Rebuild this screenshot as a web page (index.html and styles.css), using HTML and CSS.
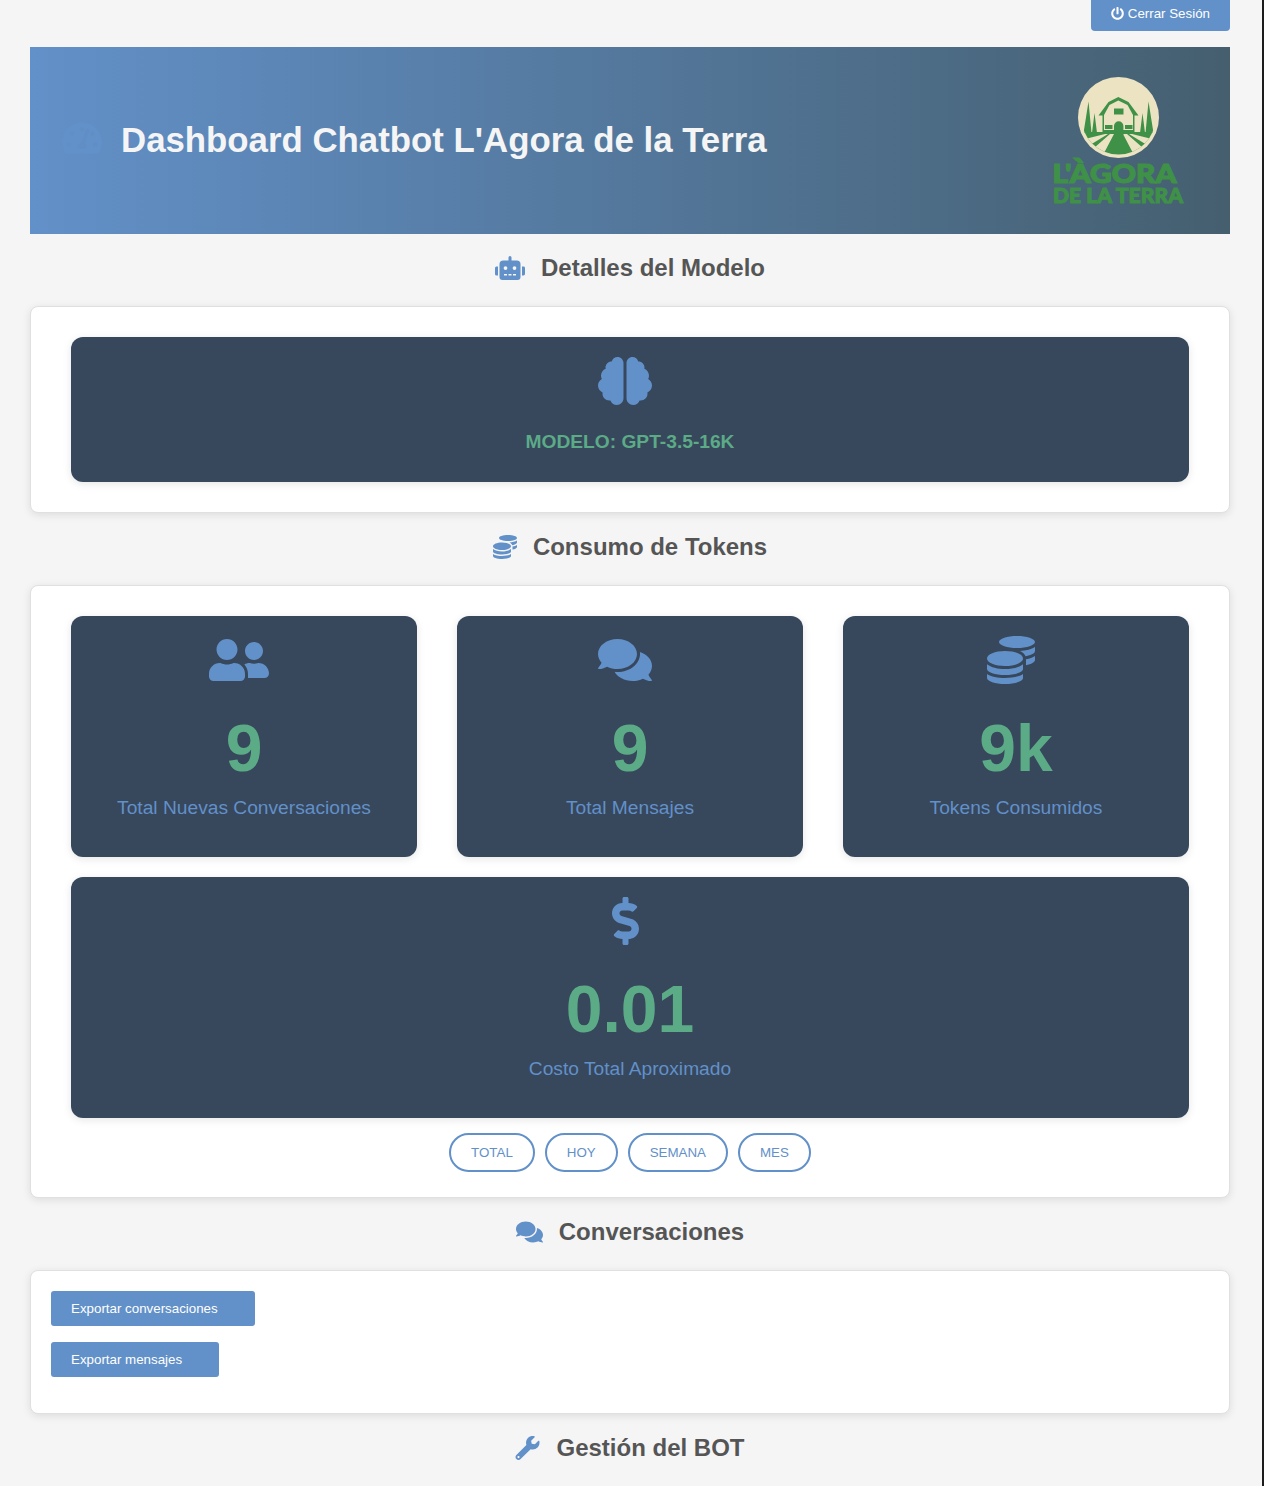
FILE: index.html
```html
<!DOCTYPE html>
<html lang="es">

<head>
    <meta charset="utf-8">
    <meta name="viewport" content="width=device-width, initial-scale=1">
    <title>Dashboard Chatbot L'Agora de la Terra</title>
    <link rel="stylesheet" href="styles.css">
</head>

<body>
    <svg class="sprite" aria-hidden="true">
        <symbol id="i-comments" viewBox="0 0 576 512"><path d="M416 192c0-88.4-93.1-160-208-160S0 103.6 0 192c0 34.3 14.1 65.9 38 92-13.4 30.2-35.5 54.2-35.8 54.5-2.2 2.3-2.8 5.7-1.5 8.7S4.8 352 8 352c36.6 0 66.9-12.3 88.7-25 32.2 15.7 70.3 25 111.3 25 114.9 0 208-71.6 208-160zm122 220c23.9-26 38-57.7 38-92 0-66.9-53.5-124.2-129.3-148.1.9 6.6 1.3 13.3 1.3 20.1 0 105.9-107.7 192-240 192-10.8 0-21.3-.8-31.7-1.9C207.8 439.6 281.8 480 368 480c41 0 79.1-9.2 111.3-25 21.8 12.7 52.1 25 88.7 25 3.2 0 6.1-1.9 7.3-4.8 1.3-2.9.7-6.3-1.5-8.7-.3-.3-22.4-24.2-35.8-54.5z"/></symbol>
        <symbol id="i-coins" viewBox="0 0 512 512"><path d="M0 405.3V448c0 35.3 86 64 192 64s192-28.7 192-64v-42.7C342.7 434.4 267.2 448 192 448S41.3 434.4 0 405.3zM320 128c106 0 192-28.7 192-64S426 0 320 0 128 28.7 128 64s86 64 192 64zM0 300.4V352c0 35.3 86 64 192 64s192-28.7 192-64v-51.6c-41.3 34-116.9 51.6-192 51.6S41.3 334.4 0 300.4zm416 11c57.3-11.1 96-31.7 96-55.4v-42.7c-23.2 16.4-57.3 27.6-96 34.5v63.6zM192 160C86 160 0 195.8 0 240s86 80 192 80 192-35.8 192-80-86-80-192-80zm219.3 56.3c60-10.8 100.7-32 100.7-56.3v-42.7c-35.5 25.1-96.5 38.6-160.7 41.8 29.5 14.3 51.2 33.5 60 57.2z"/></symbol>
    </svg>

    <main class="page">
        <div class="topbar">
            <a class="btn btn-logout" href="#">
                <svg class="power" viewBox="0 0 512 512"><path d="M400 54.1c63 45 104 118.6 104 201.9 0 136.8-110.8 247.7-247.5 248C120 504.3 8.2 393 8 256.4 7.9 173.1 48.9 99.3 111.8 54.2c11.7-8.3 28-4.8 35 7.7L162.6 90c5.9 10.5 3.1 23.8-6.6 31-41.5 30.8-68 79.6-68 134.9-.1 92.3 74.5 168.1 168 168.1 91.6 0 168.6-74.2 168-169.1-.3-51.8-24.7-101.8-68.1-134-9.7-7.2-12.4-20.5-6.5-30.9l15.8-28.1c7-12.4 23.2-16.1 34.8-7.8zM296 264V24c0-13.3-10.7-24-24-24h-32c-13.3 0-24 10.7-24 24v240c0 13.3 10.7 24 24 24h32c13.3 0 24-10.7 24-24z"/></svg>
                Cerrar Sesión
            </a>
        </div>

        <header class="hero">
            <div class="hero-title">
                <svg class="hero-icon" viewBox="0 0 576 512"><path d="M288 32C128.94 32 0 160.94 0 320c0 52.8 14.25 102.26 39.06 144.8 5.61 9.62 16.3 15.2 27.44 15.2h443c11.14 0 21.83-5.58 27.44-15.2C561.75 422.26 576 372.8 576 320c0-159.06-128.94-288-288-288zm0 64c14.71 0 26.58 10.13 30.32 23.65-1.11 2.26-2.64 4.23-3.45 6.67l-9.22 27.67c-5.13 3.49-10.97 6.01-17.64 6.01-17.67 0-32-14.33-32-32S270.33 96 288 96zM96 384c-17.67 0-32-14.33-32-32s14.33-32 32-32 32 14.33 32 32-14.33 32-32 32zm48-160c-17.67 0-32-14.33-32-32s14.33-32 32-32 32 14.33 32 32-14.33 32-32 32zm246.77-72.41l-61.33 184C343.13 347.33 352 364.54 352 384c0 11.72-3.38 22.55-8.88 32H232.88c-5.5-9.45-8.88-20.28-8.88-32 0-33.94 26.5-61.43 59.9-63.59l61.34-184.01c4.17-12.56 17.73-19.45 30.36-15.17 12.57 4.19 19.35 17.77 15.17 30.36zm14.66 57.2l15.52-46.55c3.47-1.29 7.13-2.23 11.05-2.23 17.67 0 32 14.33 32 32s-14.33 32-32 32c-11.38-.01-20.89-6.28-26.57-15.22zM480 384c-17.67 0-32-14.33-32-32s14.33-32 32-32 32 14.33 32 32-14.33 32-32 32z"/></svg>
                <h1>Dashboard Chatbot L'Agora de la Terra</h1>
            </div>
            <svg class="logo" viewBox="0 0 132 134">
                <defs>
                    <clipPath id="inner"><circle cx="66.5" cy="40.5" r="37"/></clipPath>
                </defs>
                <circle class="logo-cream" cx="66.5" cy="40.5" r="40.5"/>
                <g clip-path="url(#inner)">
                    <rect class="logo-green" x="20" y="55" width="94" height="30"/>
                    <path class="logo-green" d="M31.500 56L36.500 24.500L39.500 56ZM40 56L42.500 36L45 56ZM101.500 56L96.500 24.500L93.500 56ZM93 56L90.500 36L88 56Z"/>
                    <path class="logo-cream" d="M58 57L62 57L51 78L42 71ZM53 57L56 57L38 68L33 62ZM75 57L71 57L82 78L91 71ZM80 57L77 57L95 68L100 62Z"/>
                </g>
                <path class="logo-green" d="M66.300 20L76.500 25L86.500 38.500H82.500V55H50.500V38.500H46.500L56.500 25Z"/>
                <path class="logo-cream" d="M66.300 23.500L75.500 28L81 38V53H52V38L57.500 28Z"/>
                <rect class="logo-green" x="62" y="31.500" width="9.500" height="6"/>
                <rect class="logo-green" x="53" y="48" width="7.500" height="4"/>
                <rect class="logo-green" x="73" y="48" width="7.500" height="4"/>
                <path class="logo-green" d="M62 49a4.700 4.700 0 0 1 9.400 0V58H62Z"/>
                <text class="logo-top" x="0.500" y="106" textLength="124" lengthAdjust="spacingAndGlyphs">L'ÀGORA</text>
                <text class="logo-bottom" x="1" y="126" textLength="130" lengthAdjust="spacingAndGlyphs">DE LA TERRA</text>
            </svg>
        </header>

        <h2 class="section-title">
            <svg class="title-icon" viewBox="0 0 640 512"><path d="M32,224H64V416H32A31.96166,31.96166,0,0,1,0,384V256A31.96166,31.96166,0,0,1,32,224Zm512-48V448a64.06328,64.06328,0,0,1-64,64H160a64.06328,64.06328,0,0,1-64-64V176a79.974,79.974,0,0,1,80-80H288V32a32,32,0,0,1,64,0V96H464A79.974,79.974,0,0,1,544,176ZM264,256a40,40,0,1,0-40,40A39.997,39.997,0,0,0,264,256Zm-8,128H192v32h64Zm96,0H288v32h64ZM456,256a40,40,0,1,0-40,40A39.997,39.997,0,0,0,456,256Zm-8,128H384v32h64ZM640,256V384a31.96166,31.96166,0,0,1-32,32H576V224h32A31.96166,31.96166,0,0,1,640,256Z"/></svg>
            Detalles del Modelo
        </h2>
        <section class="card card-model">
            <div class="panel panel-model">
                <svg class="panel-icon" viewBox="0 0 576 512"><path d="M208 0c-29.9 0-54.7 20.5-61.8 48.2-.8 0-1.4-.2-2.2-.2-35.3 0-64 28.7-64 64 0 4.8.6 9.5 1.7 14C52.5 138 32 166.6 32 200c0 12.6 3.2 24.3 8.3 34.9C16.3 248.7 0 274.3 0 304c0 33.3 20.4 61.9 49.4 73.9-.9 4.6-1.4 9.3-1.4 14.1 0 39.8 32.2 72 72 72 4.1 0 8.1-.5 12-1.2 9.6 28.5 36.2 49.2 68 49.2 39.8 0 72-32.2 72-72V64c0-35.3-28.7-64-64-64zm368 304c0-29.7-16.3-55.3-40.3-69.1 5.2-10.6 8.3-22.3 8.3-34.9 0-33.4-20.5-62-49.7-74 1-4.5 1.7-9.2 1.7-14 0-35.3-28.7-64-64-64-.8 0-1.5.2-2.2.2C422.7 20.5 397.9 0 368 0c-35.3 0-64 28.6-64 64v376c0 39.8 32.2 72 72 72 31.8 0 58.4-20.7 68-49.2 3.9.7 7.9 1.2 12 1.2 39.8 0 72-32.2 72-72 0-4.8-.5-9.5-1.4-14.1 29-12 49.4-40.6 49.4-73.9z"/></svg>
                <p class="model-name">MODELO: GPT-3.5-16K</p>
            </div>
        </section>

        <h2 class="section-title">
            <svg class="title-icon coins-small"><use href="#i-coins"/></svg>
            Consumo de Tokens
        </h2>
        <section class="card card-tokens">
            <div class="stats">
                <div class="panel stat">
                    <svg class="panel-icon" viewBox="0 0 640 512"><path d="M192 256c61.9 0 112-50.1 112-112S253.9 32 192 32 80 82.1 80 144s50.1 112 112 112zm76.8 32h-8.3c-20.8 10-43.9 16-68.5 16s-47.6-6-68.5-16h-8.3C51.6 288 0 339.6 0 403.2V432c0 26.5 21.5 48 48 48h288c26.5 0 48-21.5 48-48v-28.8c0-63.6-51.6-115.2-115.2-115.2zM480 256c53 0 96-43 96-96s-43-96-96-96-96 43-96 96 43 96 96 96zm48 32h-3.8c-13.9 4.8-28.6 8-44.2 8s-30.3-3.2-44.2-8H432c-20.4 0-39.2 5.9-55.7 15.4 24.4 26.3 39.7 61.2 39.7 99.8v38.4c0 2.2-.5 4.3-.6 6.4H592c26.5 0 48-21.5 48-48 0-61.9-50.1-112-112-112z"/></svg>
                    <div class="stat-value">9</div>
                    <div class="stat-label">Total Nuevas Conversaciones</div>
                </div>
                <div class="panel stat">
                    <svg class="panel-icon icon-comments"><use href="#i-comments"/></svg>
                    <div class="stat-value">9</div>
                    <div class="stat-label">Total Mensajes</div>
                </div>
                <div class="panel stat">
                    <svg class="panel-icon icon-coins"><use href="#i-coins"/></svg>
                    <div class="stat-value">9k</div>
                    <div class="stat-label">Tokens Consumidos</div>
                </div>
                <div class="panel stat stat-wide">
                    <svg class="panel-icon" viewBox="0 0 288 512"><path d="M209.2 233.4l-108-31.6C88.7 198.2 80 186.5 80 173.5c0-16.3 13.2-29.5 29.5-29.5h66.3c12.2 0 24.2 3.7 34.2 10.5 6.1 4.1 14.3 3.1 19.5-2l34.8-34c7.1-6.9 6.1-18.4-1.8-24.5C238 74.8 207.4 64.1 176 64V16c0-8.8-7.2-16-16-16h-32c-8.8 0-16 7.2-16 16v48h-2.5C45.8 64-5.4 118.7.5 183.6c4.2 46.1 39.4 83.6 83.8 96.6l102.5 30c12.5 3.7 21.2 15.3 21.2 28.3 0 16.3-13.2 29.5-29.5 29.5h-66.3C100 368 88 364.3 78 357.5c-6.1-4.1-14.3-3.1-19.5 2l-34.8 34c-7.1 6.9-6.1 18.4 1.8 24.5 24.5 19.2 55.1 29.9 86.5 30v48c0 8.8 7.2 16 16 16h32c8.8 0 16-7.2 16-16v-48.2c46.6-.9 90.3-28.6 105.7-72.7 21.5-61.6-14.6-124.8-72.5-141.7z"/></svg>
                    <div class="stat-value">0.01</div>
                    <div class="stat-label">Costo Total Aproximado</div>
                </div>
            </div>
            <div class="filters">
                <button class="pill">Total</button>
                <button class="pill">Hoy</button>
                <button class="pill">Semana</button>
                <button class="pill">Mes</button>
            </div>
        </section>

        <h2 class="section-title">
            <svg class="title-icon comments-small"><use href="#i-comments"/></svg>
            Conversaciones
        </h2>
        <section class="card card-export">
            <a class="btn btn-export" href="#">Exportar conversaciones</a>
            <a class="btn btn-export" href="#">Exportar mensajes</a>
        </section>

        <h2 class="section-title">
            <svg class="title-icon wrench" viewBox="0 0 512 512"><path d="M507.73 109.1c-2.24-9.03-13.54-12.09-20.12-5.51l-74.36 74.36-67.88-11.31-11.31-67.88 74.36-74.36c6.62-6.62 3.43-17.9-5.66-20.16-47.38-11.74-99.55.91-136.58 37.93-39.64 39.64-50.55 97.1-34.05 147.2L18.74 402.76c-24.99 24.99-24.99 65.51 0 90.5 24.99 24.99 65.51 24.99 90.5 0l213.21-213.21c50.12 16.71 107.47 5.68 147.37-34.22 37.07-37.07 49.7-89.32 37.91-136.73zM64 472c-13.25 0-24-10.75-24-24 0-13.26 10.75-24 24-24s24 10.74 24 24c0 13.25-10.75 24-24 24z"/></svg>
            Gestión del BOT
        </h2>
    </main>
</body>

</html>
```

FILE: styles.css
```css
* {
    box-sizing: border-box;
}

html {
    background: #f5f5f5;
}

body {
    margin: 0;
    height: 1486px;
    overflow: hidden;
    background: #f5f5f5;
    border-right: 2px solid #1c1c1c;
    font-family: "Liberation Sans", Arial, sans-serif;
    color: #555;
}

.sprite {
    display: none;
}

svg {
    fill: currentColor;
}

.page {
    width: 1200px;
    margin-left: 30px;
}

.topbar {
    display: flex;
    justify-content: flex-end;
    height: 47px;
}

.btn {
    display: inline-flex;
    align-items: center;
    background: #6290c8;
    color: #fff;
    font-size: 13.33px;
    text-decoration: none;
    padding: 0 20px;
}

.btn-logout {
    height: 31px;
    padding-bottom: 4px;
    border-radius: 0 0 4px 4px;
    gap: 4px;
}

.power {
    width: 13px;
    height: 13px;
}

.hero {
    display: flex;
    align-items: center;
    justify-content: space-between;
    height: 187px;
    padding: 0 46px 0 32px;
    background: linear-gradient(90deg, #6290c8, #455f6f);
}

.hero-title {
    display: flex;
    align-items: center;
    gap: 19px;
}

.hero-icon {
    width: 40px;
    height: 36px;
    margin-bottom: 5px;
    color: #6290c8;
}

h1 {
    margin: 0 0 2px;
    font-size: 34.8px;
    font-weight: 700;
    color: #f5f5f5;
}

.logo {
    width: 132px;
    height: 134px;
    margin-top: 6px;
}

.logo-cream {
    fill: #ece3c2;
}

.logo-green {
    fill: #3f9147;
}

.logo-top,
.logo-bottom {
    fill: #3f9147;
    stroke: #3f9147;
    font-family: Lato, "Liberation Sans", sans-serif;
    font-weight: 900;
}

.logo-top {
    font-size: 27px;
    stroke-width: 1.2px;
}

.logo-bottom {
    font-size: 21px;
    stroke-width: 1px;
}

.section-title {
    display: flex;
    align-items: center;
    justify-content: center;
    gap: 16px;
    height: 28px;
    margin: 20px 0 24px;
    font-size: 24px;
    font-weight: 700;
    color: #555;
}

.title-icon {
    width: 30px;
    height: 24px;
    color: #6290c8;
}

.coins-small {
    width: 24px;
}

.comments-small {
    width: 27px;
}

.wrench {
    width: 25px;
}

.card {
    background: #fff;
    border: 1px solid #e0e0e0;
    border-radius: 8px;
    box-shadow: 0 2px 8px rgba(0, 0, 0, 0.1);
}

.card-model {
    padding: 30px 40px;
}

.card-tokens {
    padding: 30px 40px 25px;
}

.card-export {
    display: flex;
    flex-direction: column;
    align-items: flex-start;
    gap: 16px;
    height: 144px;
    padding: 20px;
}

.panel {
    background: #37475c;
    border-radius: 12px;
    box-shadow: 0 2px 8px rgba(0, 0, 0, 0.1);
    text-align: center;
    padding: 20px;
    color: #6290c8;
}

.panel-icon {
    display: block;
    height: 48px;
    margin: 0 auto;
    transform: translateX(-5px);
}

.panel-model {
    height: 145px;
}

.panel-model .panel-icon {
    width: 54px;
}

.model-name {
    margin: 26px 0 0;
    font-size: 19.2px;
    font-weight: 700;
    line-height: 22px;
    color: #5cab87;
}

.stats {
    display: grid;
    grid-template-columns: repeat(3, 346px);
    justify-content: space-between;
    row-gap: 20px;
}

.stat {
    height: 241px;
}

.stat .panel-icon {
    width: 60px;
}

.stat .icon-comments {
    width: 54px;
}

.stat .icon-coins {
    width: 48px;
}

.stat-wide .panel-icon {
    width: 27px;
}

.stat-wide {
    grid-column: 1 / -1;
}

.stat-value {
    margin-top: 27px;
    font-size: 66px;
    font-weight: 700;
    line-height: 74px;
    color: #5cab87;
}

.stat-label {
    margin-top: 12px;
    font-size: 19.2px;
    line-height: 22px;
}

.filters {
    display: flex;
    justify-content: center;
    gap: 10px;
    margin-top: 15px;
}

.pill {
    height: 39px;
    padding: 0 20px;
    background: #fff;
    border: 2px solid #6290c8;
    border-radius: 20px;
    color: #6290c8;
    font-family: inherit;
    font-size: 13.33px;
    text-transform: uppercase;
}

.btn-export {
    height: 35px;
    padding-right: 37px;
    border-radius: 3px;
}
```
